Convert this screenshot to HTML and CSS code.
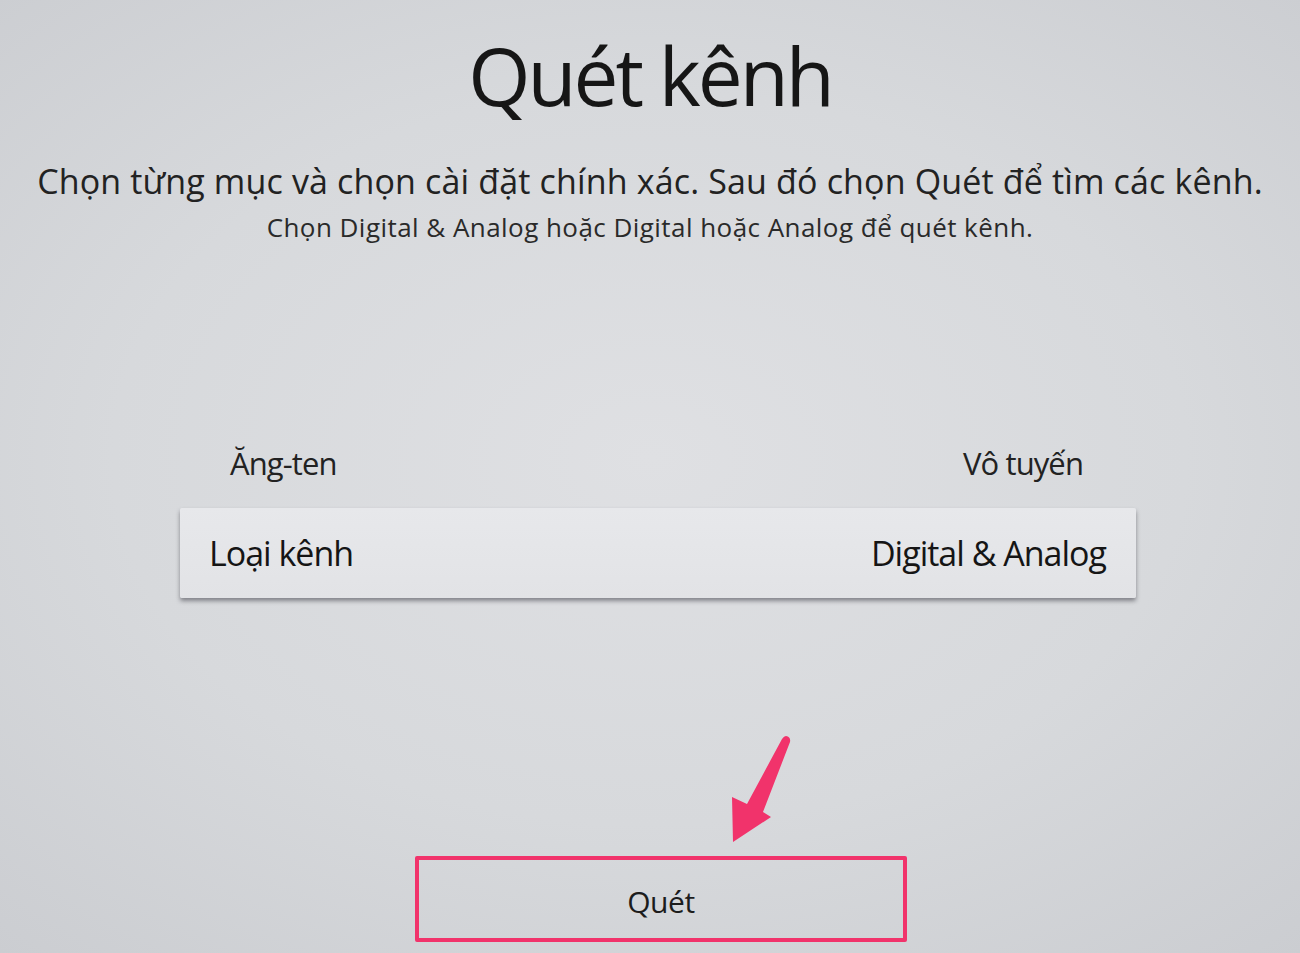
FILE: index.html
```html
<!DOCTYPE html>
<html lang="vi">
<head>
<meta charset="utf-8">
<title>Quét kênh</title>
<link rel="stylesheet" href="styles.css">
</head>
<body>
<div class="screen">
  <h1 class="title">Quét kênh</h1>
  <p class="lead">Chọn từng mục và chọn cài đặt chính xác. Sau đó chọn Quét để tìm các kênh.</p>
  <p class="hint">Chọn Digital &amp; Analog hoặc Digital hoặc Analog để quét kênh.</p>
  <div class="settings">
    <div class="row">
      <span class="label">Ăng-ten</span>
      <span class="value">Vô tuyến</span>
    </div>
    <div class="row row-focus">
      <span class="label">Loại kênh</span>
      <span class="value">Digital &amp; Analog</span>
    </div>
  </div>
  <div class="actions">
    <button class="scan">Quét</button>
  </div>
  <svg class="arrow" width="70" height="115" viewBox="725 732 70 115">
    <path d="M786 736 Q791 737 790 742 L763 812 L771 817 L733 842 L732 797 L747 804 L782 739 Q784 736 786 736 Z" fill="#f1336b"/>
  </svg>
</div>
</body>
</html>
```
FILE: styles.css
```css
html, body {
  margin: 0;
  padding: 0;
}
body {
  width: 1300px;
  height: 953px;
  overflow: hidden;
  font-family: "Open Sans", "Noto Sans", sans-serif;
  color: #1a1a1a;
  background: radial-gradient(ellipse 75% 70% at 50% 48%, #dfe0e3 0%, #d7d9dc 55%, #cbcdd1 100%);
}
.screen {
  position: relative;
  width: 1300px;
  height: 953px;
  display: flex;
  flex-direction: column;
  align-items: center;
}
.title {
  margin: 22px 0 0;
  font-size: 80px;
  font-weight: 400;
  line-height: 106px;
  letter-spacing: -3px;
  color: #161616;
}
.lead {
  margin: 32px 0 0;
  font-size: 34px;
  line-height: 42px;
  letter-spacing: 0.15px;
  color: #222;
}
.hint {
  margin: 9px 0 0;
  font-size: 26px;
  line-height: 32px;
  letter-spacing: 0.45px;
  color: #2a2a2a;
}
.settings {
  margin-top: 183px;
  margin-left: 16px;
  width: 956px;
  display: flex;
  flex-direction: column;
}
.row {
  height: 73px;
  display: flex;
  align-items: center;
  justify-content: space-between;
  padding: 0 53px 0 50px;
  font-size: 31px;
  letter-spacing: -0.9px;
  color: #222;
}
.row-focus {
  height: 90px;
  margin-top: 9px;
  padding: 0 30px 0 29px;
  font-size: 34px;
  letter-spacing: -1px;
  color: #151515;
  background: linear-gradient(#e7e8eb, #e2e3e6);
  box-shadow: 0 3px 4px rgba(60, 60, 70, 0.55);
  border-radius: 2px;
}
.actions {
  margin-top: 258px;
  margin-left: 22px;
  width: 492px;
}
.scan {
  width: 492px;
  height: 86px;
  box-sizing: border-box;
  border: 4px solid #f1336b;
  border-radius: 2px;
  background: transparent;
  font-family: "Open Sans", "Noto Sans", sans-serif;
  font-size: 30px;
  letter-spacing: -0.4px;
  color: #1c1c1c;
  padding: 4px 0 0;
}
.arrow {
  position: absolute;
  left: 725px;
  top: 732px;
}
```
